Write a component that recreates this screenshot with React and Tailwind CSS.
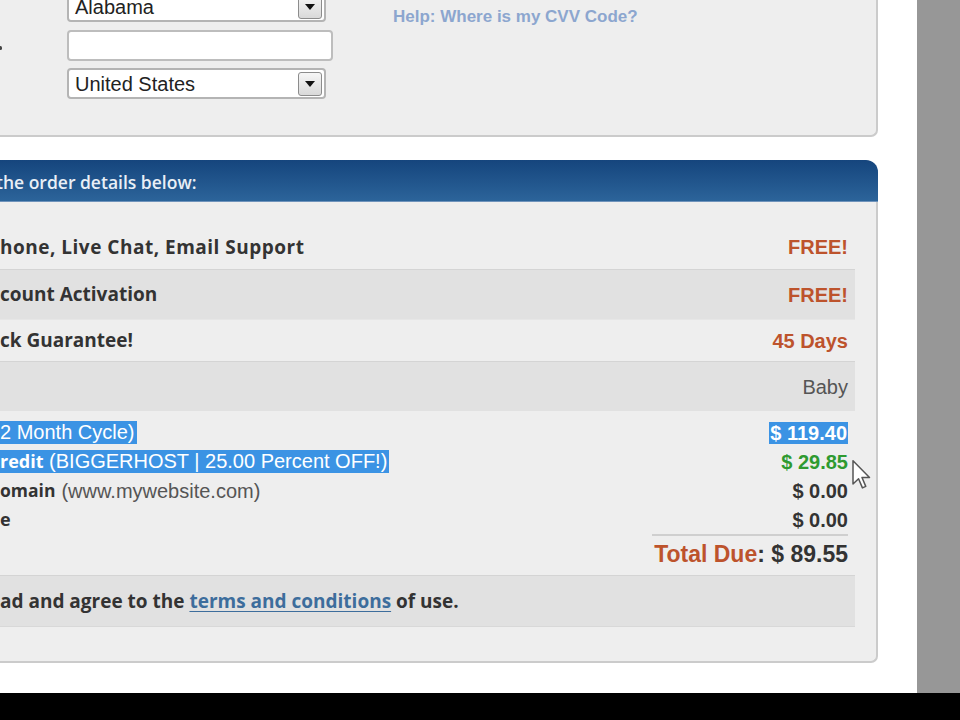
import React from "react";

const ARIAL = { fontFamily: '"Liberation Sans", Arial, sans-serif' };

function Caret() {
  return (
    <div className="w-[24px] h-[24px] mr-[2px] border border-[#8c8c8c] rounded-[3px] bg-gradient-to-b from-[#f6f6f6] to-[#d9d9d9] flex items-center justify-center">
      <svg width="10" height="6" viewBox="0 0 10 6">
        <path d="M0 0 L10 0 L5 6 Z" fill="#111" />
      </svg>
    </div>
  );
}

function Select({ label, className = "" }) {
  return (
    <div className={"h-[31px] w-[259px] bg-white border-2 border-[#b4b4b4] rounded-[4px] flex items-center justify-between " + className}>
      <span className="pl-[6px] pt-[1px] text-[20px] text-[#222] font-['Liberation_Sans',Arial,sans-serif]">{label}</span>
      <Caret />
    </div>
  );
}

export default function App() {
  return (
    <div className="w-[960px] h-[720px] flex flex-col overflow-hidden bg-white">
      <div className="flex h-[693px]">
        <div className="w-[917px] relative flex flex-col overflow-hidden">
          {/* top panel */}
          <div className="w-[878px] h-[137px] shrink-0 bg-[#eeeeee] border-r-2 border-b-2 border-[#cbcbcb] rounded-br-[7px] flex">
            <div className="w-[67px] flex flex-col">
              <div className="mt-[46px] ml-[-1px] w-[3px] h-[4px] bg-[#444] rounded-full" />
            </div>
            <div className="flex flex-col mt-[-9px]">
              <Select label="Alabama" />
              <div className="mt-[8px] h-[31px] w-[266px] bg-white border-2 border-[#bdbdbd] rounded-[4px]" />
              <Select label="United States" className="mt-[7px]" />
            </div>
            <div className="ml-[60px] pt-[4px] text-[17px] font-bold text-[#8ca6cf] font-['Liberation_Sans',Arial,sans-serif]">
              Help: Where is my CVV Code?
            </div>
          </div>

          <div className="h-[23px] shrink-0" />

          {/* order panel */}
          <div className="w-[878px] flex flex-col shrink-0">
            <div className="h-[42px] rounded-tr-[12px] bg-gradient-to-b from-[#15457d] to-[#2c649a] border-b border-[#6f93bb] flex items-center">
              <span className="ml-[-4px] pt-[3px] text-[17.5px] font-semibold text-[#e9eff6] font-['Open_Sans',sans-serif]">
                the order details below:
              </span>
            </div>
            <div className="h-[461px] bg-[#eeeeee] border-r-2 border-b-2 border-[#cbcbcb] rounded-br-[7px] pr-[21px] flex flex-col text-[#333]">
              <div className="h-[67px] pt-[23px] flex items-center justify-between">
                <span className="text-[19px] font-bold tracking-[0.5px] font-['Open_Sans',sans-serif]">hone, Live Chat, Email Support</span>
                <span className="pr-[7px] text-[20px] font-bold text-[#bd532c]" style={ARIAL}>FREE!</span>
              </div>
              <div className="h-[50px] bg-[#e1e1e1] border-t border-[#d4d4d4] flex items-center justify-between">
                <span className="text-[19px] font-bold font-['Open_Sans',sans-serif]">count Activation</span>
                <span className="pr-[7px] text-[20px] font-bold text-[#bd532c]" style={ARIAL}>FREE!</span>
              </div>
              <div className="h-[42px] border-t border-[#e6e6e6] flex items-center justify-between">
                <span className="text-[19px] font-bold font-['Open_Sans',sans-serif]">ck Guarantee!</span>
                <span className="pr-[7px] text-[20px] font-bold text-[#bd532c]" style={ARIAL}>45 Days</span>
              </div>
              <div className="h-[50px] bg-[#e1e1e1] border-t border-[#d4d4d4] flex items-center justify-end">
                <span className="pr-[7px] text-[20px] text-[#555]" style={ARIAL}>Baby</span>
              </div>

              <div className="h-[164px] pt-[7px] flex justify-between">
                <div className="flex flex-col">
                  <div className="h-[29px] flex items-center">
                    <span className="bg-[#3b93e4] text-white text-[20px] leading-[23px] pr-[2px]" style={ARIAL}>2 Month Cycle)</span>
                  </div>
                  <div className="h-[29px] flex items-center">
                    <span className="bg-[#3b93e4] text-white text-[20px] leading-[23px] pr-[2px]" style={ARIAL}>
                      <span className="font-bold text-[18px] font-['Open_Sans',sans-serif]">redit</span> (BIGGERHOST | 25.00 Percent OFF!)
                    </span>
                  </div>
                  <div className="h-[29px] flex items-center">
                    <span className="font-bold font-['Open_Sans',sans-serif] text-[17.5px]">omain</span>
                    <span className="ml-[6px] text-[20px] text-[#555]" style={ARIAL}>(www.mywebsite.com)</span>
                  </div>
                  <div className="h-[29px] flex items-center">
                    <span className="font-bold font-['Open_Sans',sans-serif] text-[18px]">e</span>
                  </div>
                </div>
                <div className="flex flex-col items-end pr-[7px]" style={ARIAL}>
                  <div className="h-[29px] flex items-center">
                    <span className="bg-[#3b93e4] text-white text-[20px] font-bold leading-[22px] px-[1px]">$ 119.40</span>
                  </div>
                  <div className="h-[29px] flex items-center text-[20px] font-bold text-[#2f9a30]">$ 29.85</div>
                  <div className="h-[29px] flex items-center text-[20px] font-bold text-[#333]">$ 0.00</div>
                  <div className="h-[29px] flex items-center text-[20px] font-bold text-[#333]">$ 0.00</div>
                  <div className="w-[196px] h-[38px] border-t-2 border-[#cfcfcf] flex items-center justify-end text-[23px] font-bold">
                    <span className="text-[#bd532c]">Total Due</span>
                    <span className="text-[#333]">: $ 89.55</span>
                  </div>
                </div>
              </div>

              <div className="h-[52px] bg-[#e1e1e1] border-t border-[#d4d4d4] border-b border-b-[#d8d8d8] flex items-center">
                <span className="text-[19px] font-bold font-['Open_Sans',sans-serif] text-[#333]">
                  ad and agree to the{" "}
                  <span className="text-[#3d6d9c] underline underline-offset-[3px]">terms and conditions</span> of use.
                </span>
              </div>
            </div>
          </div>

          {/* mouse cursor */}
          <svg className="absolute left-[852px] top-[460px]" width="20" height="30" viewBox="0 0 13 20">
            <path d="M0.5 0.5 L0.5 16 L4.2 12.5 L6.8 18.6 L9 17.6 L6.5 11.7 L11.5 11.7 Z" fill="#fff" stroke="#555" strokeWidth="1" strokeLinejoin="round" />
          </svg>
        </div>
        <div className="flex-1 bg-[#979797]" />
      </div>
      <div className="flex-1 bg-black" />
    </div>
  );
}
